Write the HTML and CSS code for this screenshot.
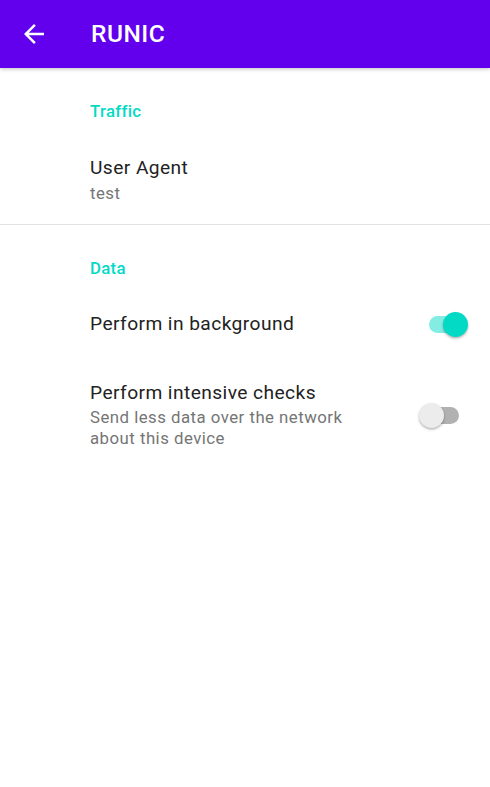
FILE: index.html
```html
<!DOCTYPE html>
<html>
<head>
<meta charset="utf-8">
<link rel="stylesheet" href="styles.css">
</head>
<body>
<header class="appbar">
  <svg class="back" viewBox="0 0 24 24" width="30" height="30"><path fill="#fff" d="M20 11H7.83l5.59-5.59L12 4l-8 8 8 8 1.41-1.41L7.83 13H20v-2z"/></svg>
  <h1 class="title">RUNIC</h1>
</header>
<main class="prefs">
  <section class="group first">
    <div class="category">Traffic</div>
    <div class="pref">
      <div class="texts">
        <div class="pref-title">User Agent</div>
        <div class="pref-summary">test</div>
      </div>
    </div>
  </section>
  <div class="divider"></div>
  <section class="group">
    <div class="category">Data</div>
    <div class="pref row one">
      <div class="texts">
        <div class="pref-title">Perform in background</div>
      </div>
      <div class="switch on"><span class="track"></span><span class="thumb"></span></div>
    </div>
    <div class="pref row two">
      <div class="texts narrow">
        <div class="pref-title">Perform intensive checks</div>
        <div class="pref-summary multi">Send less data over the network about this device</div>
      </div>
      <div class="switch off"><span class="track"></span><span class="thumb"></span></div>
    </div>
  </section>
</main>
</body>
</html>
```

FILE: styles.css
```css
* { box-sizing: border-box; }
html, body { margin: 0; padding: 0; background: #fff; }
body { font-family: Roboto, "Noto Sans", sans-serif; width: 490px; height: 787px; overflow: hidden; }

.appbar {
  height: 68px;
  background: #6200ee;
  display: flex;
  align-items: center;
  padding-left: 19px;
  box-shadow: 0 1px 4px rgba(0,0,0,0.25);
  position: relative;
  z-index: 1;
}
.back { display: block; flex: none; }
.title {
  margin: 0 0 0 42px;
  color: #fff;
  font-size: 24.5px;
  font-weight: 500;
  line-height: 28px;
  letter-spacing: 0.5px;
}

.prefs { padding-left: 90px; }
.group { padding-top: 33px; }
.category {
  color: #03dac5;
  font-size: 16.8px;
  font-weight: 500;
  line-height: 20px;
  letter-spacing: 0.3px;
}
.pref { display: flex; align-items: center; }
.group.first .pref { padding-top: 35px; padding-bottom: 21px; }
.pref-title {
  color: #222;
  font-size: 19.2px;
  line-height: 24px;
  letter-spacing: 0.42px;
}
.pref-summary {
  color: #757575;
  font-size: 16.8px;
  line-height: 20px;
  margin-top: 3px;
  letter-spacing: 0.48px;
}
.pref-summary.multi { line-height: 21px; margin-top: 2px; }
.texts { flex: 1; }
.texts.narrow { flex: none; width: 275px; }
.row.one { padding-top: 33px; }
.row.two { padding-top: 44px; }
.row { padding-right: 21px; justify-content: space-between; }

.divider { height: 1px; background: #e2e2e2; margin-left: -90px; }

.switch {
  position: relative;
  width: 50px;
  height: 26px;
  flex: none;
}
.switch .track {
  position: absolute;
  left: 10px; top: 4.5px;
  width: 30px; height: 17px;
  border-radius: 9px;
}
.switch .thumb {
  position: absolute;
  top: 0.5px;
  width: 25px; height: 25px;
  border-radius: 50%;
  box-shadow: 0 1.5px 2.5px rgba(0,0,0,0.3);
}
.switch.on .track { background: #83ede3; }
.switch.on .thumb { background: #03dac5; left: 24px; }
.switch.off .track { background: #b1b1b1; }
.switch.off .thumb { background: #ececec; left: 0; }
```
